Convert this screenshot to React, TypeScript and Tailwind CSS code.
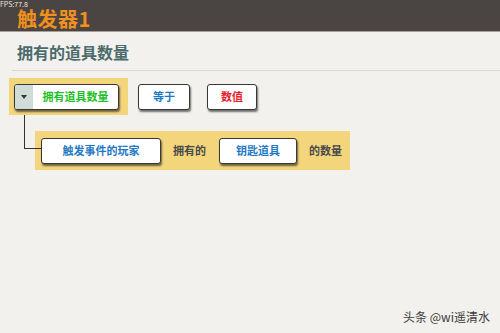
const font = "font-['Noto_Sans_CJK_SC','Noto_Sans',sans-serif]";

type BtnProps = {
  label: string;
  color: string;
  className?: string;
};

function Btn({ label, color, className = "" }: BtnProps) {
  return (
    <div
      className={`h-[26px] flex items-center justify-center bg-white border-[1.5px] border-[#3a3836] rounded-[3px] shadow-[1px_2px_2px_rgba(0,0,0,0.55)] text-[11px] font-bold ${color} ${className}`}
    >
      {label}
    </div>
  );
}

export default function App() {
  return (
    <div
      className={`relative w-[500px] h-[333px] overflow-hidden bg-[#f3f1ee] ${font}`}
    >
      <div className="h-[32px] bg-[#4a4442] border-b border-[#a59e9a] pl-[17px] flex items-center pt-[6px]">
        <span className="text-[20px] leading-none font-bold text-[#f0901e] tracking-[0.5px]">
          触发器1
        </span>
      </div>
      <div className="absolute left-0 top-0 text-[7px] leading-[8px] text-[#e8e4e0]">
        FPS:77.8
      </div>

      <div className="h-[38px] flex items-center pl-[17px] pt-[2px]">
        <span className="text-[16px] leading-none font-bold text-[#4b6b6b]">
          拥有的道具数量
        </span>
      </div>
      <div className="ml-[12px] h-px bg-[#dcd9d5]" />

      <div className="pl-[9px] pt-[7px]">
        <div className="flex items-center">
          <div className="w-[119px] h-[37px] bg-[#f3d67c] flex items-center pl-[5px]">
            <div className="w-[105px] h-[26px] flex bg-white border-[1.5px] border-[#3a3836] rounded-[3px] shadow-[1px_2px_2px_rgba(0,0,0,0.55)] overflow-hidden">
              <div className="w-[18px] bg-[#cfdcd8] flex items-center justify-center">
                <div className="w-0 h-0 border-l-[3px] border-r-[3px] border-t-[4px] border-l-transparent border-r-transparent border-t-[#333]" />
              </div>
              <div className="flex-1 flex items-center justify-center text-[11px] font-bold text-[#1fbf2a]">
                拥有道具数量
              </div>
            </div>
          </div>
          <Btn label="等于" color="text-[#1f78c4]" className="w-[52px] ml-[10px]" />
          <Btn label="数值" color="text-[#e8202b]" className="w-[50px] ml-[17px]" />
        </div>

        <div className="mt-[16px] ml-[26px] w-[315px] h-[39px] bg-[#f3d67c] flex items-center pl-[6px]">
          <Btn label="触发事件的玩家" color="text-[#1f78c4]" className="w-[120px]" />
          <span className="ml-[12px] text-[11px] font-bold text-[#4a4a4a]">拥有的</span>
          <Btn label="钥匙道具" color="text-[#1f78c4]" className="w-[78px] ml-[13px]" />
          <span className="ml-[12px] text-[11px] font-bold text-[#4a4a4a]">的数量</span>
        </div>
      </div>

      <div className="absolute left-[24px] top-[115px] w-[17px] h-[34px] border-l border-b border-[#333]" />

      <div className="absolute right-[10px] bottom-[7px] text-[12px] text-[#3c3c3c]">
        头条 @wi遥清水
      </div>
    </div>
  );
}
